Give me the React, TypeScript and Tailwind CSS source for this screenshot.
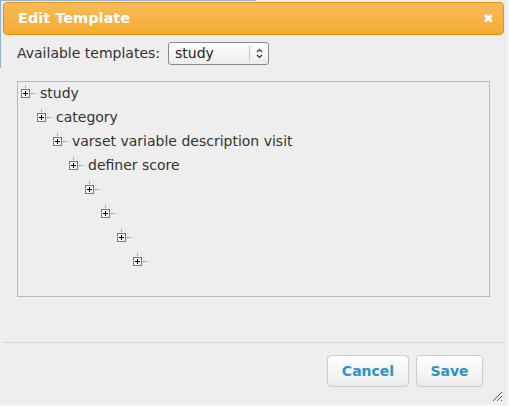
import type { ReactNode } from "react";

const font = { fontFamily: '"DejaVu Sans", Verdana, sans-serif' };

function Expander() {
  return (
    <div className="relative h-[9px] w-[9px] shrink-0">
      {/* dotted lines of the tree */}
      <div className="absolute left-[4px] top-[-4px] h-[3px] border-l border-dotted border-[#888]" />
      <div className="absolute left-[10px] top-[4px] w-[4px] border-t border-dotted border-[#888]" />
      <div className="relative h-[9px] w-[9px] border border-[#7a7a7a] bg-[#f4f4f4]">
        <div className="absolute left-[1px] top-[3px] h-px w-[5px] bg-black" />
        <div className="absolute left-[3px] top-[1px] h-[5px] w-px bg-black" />
      </div>
    </div>
  );
}

function Node({ label, children }: { label?: string; children?: ReactNode }) {
  return (
    <div>
      <div className="flex h-6 items-center">
        <Expander />
        {label && <span className="ml-[10px] text-[14px] text-[#333]">{label}</span>}
      </div>
      {children && <div className="pl-4">{children}</div>}
    </div>
  );
}

export default function App() {
  return (
    <div className="relative h-[406px] w-[509px] bg-[#f4f4f4]" style={font}>
      <div className="absolute left-0 top-0 h-px w-[256px] bg-[#8fb0d8]" />
      <div className="absolute left-0 top-0 h-[68px] w-px bg-[#8fb0d8]" />

      <div className="flex h-[404px] w-[507px] flex-col bg-[#eeeeee] px-[3px] pt-[2px]">
        {/* header */}
        <div className="flex h-[33px] items-center justify-between rounded-[4px] border border-[#e6920f] bg-gradient-to-b from-[#f7bb58] to-[#f5aa30] pl-[14px] pr-[9px]">
          <span className="text-[14.5px] font-bold text-white">Edit Template</span>
          <span className="text-[13px] font-bold leading-none text-white">✖</span>
        </div>

        {/* body */}
        <div className="flex flex-1 flex-col px-[14px]">
          <div className="mt-[7px] flex h-[23px] items-center">
            <span className="text-[14px] text-[#333]">Available templates:</span>
            <div className="ml-[8px] flex h-[23px] w-[101px] items-center rounded-[3px] border border-[#8a8a8a] bg-gradient-to-b from-white to-[#ececec]">
              <span className="flex-1 pl-[6px] text-[14px] text-[#222]">study</span>
              <div className="flex h-[15px] w-[19px] items-center justify-center border-l border-[#c8c8c8]">
                <svg width="7" height="11" viewBox="0 0 7 11" fill="none" stroke="#333" strokeWidth="1.2">
                  <path d="M1 4 L3.5 1.5 L6 4" />
                  <path d="M1 7 L3.5 9.5 L6 7" />
                </svg>
              </div>
            </div>
          </div>

          <div className="mt-[16px] h-[216px] w-[473px] border border-[#b8b8b8] pl-[3px]">
            <div className="-mt-[1px]">
              <Node label="study">
                <Node label="category">
                  <Node label="varset variable description visit">
                    <Node label="definer score">
                      <Node>
                        <Node>
                          <Node>
                            <Node />
                          </Node>
                        </Node>
                      </Node>
                    </Node>
                  </Node>
                </Node>
              </Node>
            </div>
          </div>
        </div>

        {/* footer */}
        <div className="relative h-[62px] border-t border-[#d8d8d8]">
          <div className="flex justify-end gap-[7px] pr-[21px] pt-[12px]">
            <button className="h-[32px] w-[82px] rounded-[4px] border border-[#cccccc] bg-gradient-to-b from-white to-[#ececec] text-[14px] font-bold text-[#2a94c8]">
              Cancel
            </button>
            <button className="h-[32px] w-[67px] rounded-[4px] border border-[#cccccc] bg-gradient-to-b from-white to-[#ececec] text-[14px] font-bold text-[#2a94c8]">
              Save
            </button>
          </div>
          <svg className="absolute bottom-[2px] right-[1px]" width="12" height="12" viewBox="0 0 12 12" stroke="#555" strokeWidth="1">
            <path d="M2 11 L11 2" />
            <path d="M6 11 L11 6" />
            <path d="M10 11 L11 10" />
          </svg>
        </div>
      </div>
    </div>
  );
}
